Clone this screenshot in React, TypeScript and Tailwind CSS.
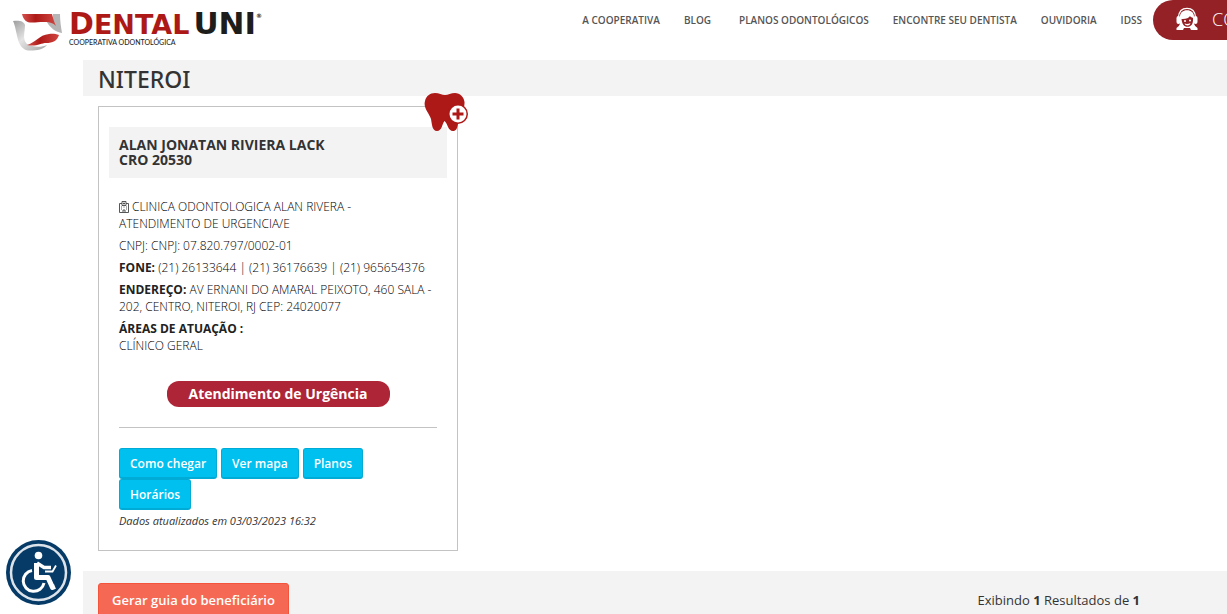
import type { ReactNode } from "react";

interface MenuItem {
  label: string;
  className: string;
}

const menu: MenuItem[] = [
  { label: "A COOPERATIVA", className: "mr-6" },
  { label: "BLOG", className: "mr-7" },
  { label: "PLANOS ODONTOLÓGICOS", className: "mr-6" },
  { label: "ENCONTRE SEU DENTISTA", className: "mr-6" },
  { label: "OUVIDORIA", className: "mr-6" },
  { label: "IDSS", className: "mr-[11px]" },
];

const actions = ["Como chegar", "Ver mapa", "Planos", "Horários"];

function Logo() {
  return (
    <a href="#" className="flex shrink-0 items-start" aria-label="Dental Uni">
      <svg width="50" height="40" viewBox="0 0 50 40" className="mt-3 mr-[6px]">
        <defs>
          <linearGradient id="silver" x1="0" y1="0" x2="1" y2="1">
            <stop offset="0" stopColor="#9c9c9c" />
            <stop offset="0.45" stopColor="#e4e4e4" />
            <stop offset="1" stopColor="#a3a3a3" />
          </linearGradient>
          <linearGradient id="ribbon" x1="0" y1="0" x2="1" y2="0">
            <stop offset="0" stopColor="#d5504c" />
            <stop offset="0.4" stopColor="#ad1917" />
            <stop offset="1" stopColor="#d04641" />
          </linearGradient>
        </defs>
        <path d="M0 9C6 8 11 9 12 13C12 20 9 27 14 32C19 35 28 36 34 33C30 38 21 39 15 38.500C3 36 5 20 0 9Z" fill="url(#silver)" />
        <path d="M40 2H47C47 9 48 15 49 21C43 20 37 16 34 10C38 10 40 7 40 2Z" fill="#b5b5b5" />
        <path d="M9 2H39C40 6 41 10 43 14C40 11 37 10 33 10C27 9.500 22 11 17 10.500C12 10 10 6 9 2Z" fill="url(#ribbon)" />
        <path d="M14 33C22 31 26 23 36 22C40 21.500 43 22 46 23C44 29 40 31 33 31C28 31 23 35 14 33Z" fill="url(#ribbon)" />
      </svg>
      <span className="flex flex-col">
        <span className="mt-[7px] flex items-baseline font-['DejaVu_Sans'] text-[30px] leading-8 font-bold text-[#ad1917]">
          D<span className="text-[27px] leading-8">ENTAL</span>
          <span className="ml-1 text-[31px] leading-8 text-[#1d1d1b]">UNI</span>
          <sup className="-top-4 text-[6px] text-[#1d1d1b]">®</sup>
        </span>
        <span className="-mt-1 font-[Lato] text-[7px] leading-[10px] font-medium text-[#1d1d1b]">COOPERATIVA ODONTOLÓGICA</span>
      </span>
    </a>
  );
}

function AttendantIcon() {
  return (
    <svg width="22" height="24" viewBox="0 0 22 24" className="shrink-0" aria-hidden="true">
      <path d="M2.500 10C3 4 6 1.300 11 1.300S19 4 19.500 10" fill="none" stroke="#fff" strokeWidth="1.300" />
      <path d="M4 10C4 5.500 7 3.300 11 3.300S18 5.500 18 10V16C18 18 20 20 21.500 21V23H15L14 21H8L7 23H.5V21C2 20 4 18 4 16Z" fill="#fff" />
      <rect x="0.500" y="9" width="4" height="8" rx="2" fill="#fff" />
      <rect x="17.500" y="9" width="4" height="8" rx="2" fill="#fff" />
      <path d="M5.500 12C9 12.500 13 11 14 9C14.500 10 16 10.500 17 11C17.500 17 15 19.800 11.500 19.800S6 17 5.500 12Z" fill="#942126" />
      <circle cx="9" cy="14" r="1" fill="#fff" />
      <circle cx="14" cy="13.500" r="1" fill="#fff" />
      <path d="M8.500 16.500Q11.500 17.500 14.500 16Q14 18.500 11.500 18.500T8.500 16.500Z" fill="#fff" />
    </svg>
  );
}

function ToothIcon() {
  return (
    <svg width="44" height="40" viewBox="0 0 44 40" className="absolute -top-[14px] -right-[11px]" aria-hidden="true">
      <path
        d="M1 8C2 3 6 0 11 0C15 0 18 2 21 2C24 2 27 0 31 0C36 0 40 4 40.500 9C41 17 35 23 34 31C33 36 32 38 29 38C24 38 24 31 20.500 28C18 31 18 38 13 38C8 38 8 31 7 26C5 20-1 15 1 8Z"
        fill="#ad1917"
      />
      <circle cx="34" cy="21" r="10" fill="#ad1917" />
      <circle cx="34" cy="21" r="8.500" fill="#fff" />
      <path d="M34 15.500V26.500M28.500 21H39.500" stroke="#ad1917" strokeWidth="3" />
    </svg>
  );
}

function HospitalIcon() {
  return (
    <svg width="10" height="12" viewBox="0 0 10 12" className="mr-[3px] inline-block align-[-2px]" fill="none" stroke="#444" strokeWidth="0.900" aria-hidden="true">
      <path d="M3 2.500H.5V11.500H9.500V2.500H7M3 .5H7V4.500H3ZM4 11V9H6V11" />
      <path d="M5 1.500V3.500M4 2.500H6M2 6H3M4.500 6H5.500M7 6H8M2 8H3M7 8H8" />
    </svg>
  );
}

function AccessibilityButton() {
  return (
    <button type="button" aria-label="Acessibilidade" className="fixed bottom-[9px] left-[6px] size-[65px] rounded-full">
      <svg viewBox="0 0 65 65" className="size-full">
        <circle cx="32.500" cy="32.500" r="32.500" fill="#063b67" />
        <circle cx="32.500" cy="32.500" r="27.500" fill="none" stroke="#dce3ea" strokeWidth="2.500" />
        <circle cx="32.500" cy="15.500" r="3.800" fill="#fff" />
        <path d="M30.500 23V37.500H42L46.500 47.500L49 46.500" fill="none" stroke="#fff" strokeWidth="5" strokeLinejoin="round" />
        <path d="M31 23L38 27.500H45" fill="none" stroke="#fff" strokeWidth="3.500" />
        <path d="M39 31.500H46.500L50 25.500" fill="none" stroke="#fff" strokeWidth="1.800" />
        <path d="M26 30.500A10.500 10.500 0 1 0 38 43" fill="none" stroke="#fff" strokeWidth="3" />
      </svg>
    </button>
  );
}

function Info({ label, children }: { label?: string; children: ReactNode }) {
  return (
    <p>
      {label && <strong className="font-bold text-[#222]">{label} </strong>}
      {children}
    </p>
  );
}

export default function App() {
  return (
    <div className="h-screen overflow-hidden bg-white font-['Open_Sans','Noto_Sans',sans-serif] text-[#333]">
      <header className="flex h-[60px] items-start pl-[13px]">
        <Logo />
        <nav className="ml-auto flex h-10 shrink-0 items-center text-[10px] font-semibold text-[#555]">
          {menu.map((item) => (
            <a key={item.label} href="#" className={item.className}>
              {item.label}
            </a>
          ))}
        </nav>
        <a
          href="#"
          className="flex h-10 w-[74px] shrink-0 items-center gap-[14px] overflow-hidden rounded-l-full bg-[#942126] pb-[2px] pl-[23px] text-lg font-light text-white"
        >
          <AttendantIcon />
          CO
        </a>
      </header>

      <main className="ml-[83px]">
        <h1 className="bg-[#f3f3f3] px-[15px] pt-[2px] font-['Noto_Sans'] text-[23px] leading-[34px] font-medium">NITEROI</h1>

        <article className="relative mt-[10px] ml-[15px] w-[360px] border border-[#c3c3c3] px-[10px] pt-5 pb-[21px]">
          <ToothIcon />
          <h2 className="mb-5 bg-[#f3f3f3] px-[10px] pt-[10px] pb-[11px] text-sm leading-[15px] font-bold">
            ALAN JONATAN RIVIERA LACK
            <br />
            CRO 20530
          </h2>

          <div className="px-[10px]">
            <div className="flex flex-col gap-[5px] text-xs leading-[17px] font-light text-black">
              <Info>
                <HospitalIcon />
                CLINICA ODONTOLOGICA ALAN RIVERA -<br />
                ATENDIMENTO DE URGENCIA/E
              </Info>
              <Info>CNPJ: CNPJ: 07.820.797/0002-01</Info>
              <Info label="FONE:">(21) 26133644 | (21) 36176639 | (21) 965654376</Info>
              <Info label="ENDEREÇO:">
                AV ERNANI DO AMARAL PEIXOTO, 460 SALA -<br />
                202, CENTRO, NITEROI, RJ CEP: 24020077
              </Info>
              <Info label="ÁREAS DE ATUAÇÃO :">
                <br />
                CLÍNICO GERAL
              </Info>
            </div>

            <p className="mx-auto mt-[27px] w-[223px] rounded-xl bg-[#ae2538] text-center text-sm leading-[26px] font-bold text-white">
              Atendimento de Urgência
            </p>

            <hr className="my-5 border-[#c3c3c3]" />

            <div className="flex flex-wrap gap-x-1 pr-[60px]">
              {actions.map((action) => (
                <button
                  key={action}
                  type="button"
                  className="h-[31px] rounded-[3px] border border-b-2 border-[#00acd6] bg-[#00c0ef] px-[10px] pt-px text-xs font-semibold text-white"
                >
                  {action}
                </button>
              ))}
            </div>
            <p className="mt-[3px] text-[11px] leading-4 italic">Dados atualizados em 03/03/2023 16:32</p>
          </div>
        </article>

        <footer className="mt-5 flex items-start justify-between bg-[#f3f3f3] py-3 pr-[87px] pl-[15px] text-[13px]">
          <button type="button" className="h-9 rounded-[3px] border border-[#f4543c] bg-[#f56954] px-[13px] font-semibold text-white">
            Gerar guia do beneficiário
          </button>
          <p className="mt-2">
            Exibindo <strong className="font-bold">1</strong> Resultados de <strong className="font-bold">1</strong>
          </p>
        </footer>
      </main>

      <AccessibilityButton />
    </div>
  );
}
